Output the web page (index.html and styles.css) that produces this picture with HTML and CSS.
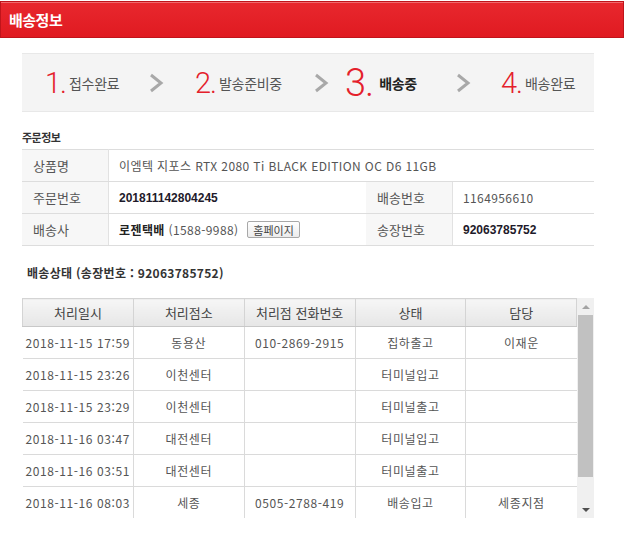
FILE: index.html
```html
<!DOCTYPE html>
<html lang="ko">
<head>
    <meta charset="UTF-8">
    <title>배송정보</title>
    <link rel="stylesheet" href="styles.css">
</head>
<body>

<header class="title-bar">
    <h1>배송정보</h1>
</header>

<div class="steps">
    <div class="step step-1"><span class="num">1.</span>접수완료</div>
    <div class="arrow arrow-1"><svg width="16" height="20" viewBox="0 0 16 20"><polyline points="3,2 13,10 3,18" fill="none" stroke="#a8a8a8" stroke-width="3"/></svg></div>
    <div class="step step-2"><span class="num">2.</span>발송준비중</div>
    <div class="arrow arrow-2"><svg width="16" height="20" viewBox="0 0 16 20"><polyline points="3,2 13,10 3,18" fill="none" stroke="#a8a8a8" stroke-width="3"/></svg></div>
    <div class="step step-3 current"><span class="num">3.</span>배송중</div>
    <div class="arrow arrow-3"><svg width="16" height="20" viewBox="0 0 16 20"><polyline points="3,2 13,10 3,18" fill="none" stroke="#a8a8a8" stroke-width="3"/></svg></div>
    <div class="step step-4"><span class="num">4.</span>배송완료</div>
</div>

<div class="section">
    <h2 class="sub-title">주문정보</h2>
    <table class="info-table">
        <tr>
            <th>상품명</th>
            <td colspan="3">이엠텍 지포스 RTX 2080 Ti BLACK EDITION OC D6 11GB</td>
        </tr>
        <tr>
            <th>주문번호</th>
            <td class="strong">201811142804245</td>
            <th>배송번호</th>
            <td>1164956610</td>
        </tr>
        <tr>
            <th>배송사</th>
            <td><b class="company">로젠택배</b> (1588-9988) <button class="home-btn">홈페이지</button></td>
            <th>송장번호</th>
            <td class="strong">92063785752</td>
        </tr>
    </table>

    <h2 class="sub-title track-title">배송상태 (송장번호 : 92063785752)</h2>

    <div class="track-box">
        <table class="track-table">
            <tr>
                <th>처리일시</th>
                <th>처리점소</th>
                <th>처리점 전화번호</th>
                <th>상태</th>
                <th>담당</th>
            </tr>
            <tr>
                <td>2018-11-15 17:59</td>
                <td>동용산</td>
                <td>010-2869-2915</td>
                <td>집하출고</td>
                <td>이재운</td>
            </tr>
            <tr>
                <td>2018-11-15 23:26</td>
                <td>이천센터</td>
                <td></td>
                <td>터미널입고</td>
                <td></td>
            </tr>
            <tr>
                <td>2018-11-15 23:29</td>
                <td>이천센터</td>
                <td></td>
                <td>터미널출고</td>
                <td></td>
            </tr>
            <tr>
                <td>2018-11-16 03:47</td>
                <td>대전센터</td>
                <td></td>
                <td>터미널입고</td>
                <td></td>
            </tr>
            <tr>
                <td>2018-11-16 03:51</td>
                <td>대전센터</td>
                <td></td>
                <td>터미널출고</td>
                <td></td>
            </tr>
            <tr>
                <td>2018-11-16 08:03</td>
                <td>세종</td>
                <td>0505-2788-419</td>
                <td>배송입고</td>
                <td>세종지점</td>
            </tr>
        </table>
        <div class="scrollbar">
            <div class="scroll-btn up"></div>
            <div class="scroll-thumb"></div>
            <div class="scroll-track"></div>
            <div class="scroll-btn down"></div>
        </div>
    </div>
</div>

</body>
</html>
```

FILE: styles.css
```css
body {
    margin: 0;
    padding: 0;
    background-color: #fff;
    font-family: "Noto Sans CJK KR", "DejaVu Sans", sans-serif;
    color: #555;
}

.title-bar {
    width: 622px;
    height: 35px;
    margin-top: 1px;
    border: 1px solid #c0141b;
    background: linear-gradient(#e8282e, #e01a21);
    box-shadow: inset 0 1px 0 #f06a6e;
    display: flex;
    align-items: center;
}

.title-bar h1 {
    margin: 0 0 0 8px;
    font-size: 15px;
    font-weight: bold;
    color: #fff;
    letter-spacing: -0.5px;
}

.steps {
    margin: 15px 0 0 22px;
    width: 549px;
    height: 57px;
    padding-left: 23px;
    background-color: #f4f4f4;
    border-top: 1px solid #e8e8e8;
    border-bottom: 1px solid #e8e8e8;
    display: flex;
    align-items: center;
}

.step {
    display: flex;
    align-items: center;
    font-size: 14px;
    color: #555;
    letter-spacing: -0.3px;
}

.step .num {
    font-family: Roboto, "Liberation Sans", sans-serif;
    font-weight: 300;
    font-size: 29px;
    color: #e4202b;
    margin-right: 3px;
    letter-spacing: -1px;
}

.step-1 { width: 103px; }
.step-2 { width: 118px; }
.step-3 { width: 110px; }

.step.current {
    color: #222;
    font-weight: bold;
}

.step.current .num {
    font-size: 38px;
    margin-right: 6px;
}

.arrow {
    display: flex;
    align-items: center;
}

.arrow-1 { width: 47px; }
.arrow-2 { width: 32px; }
.arrow-3 { width: 46px; }

.section {
    margin-left: 22px;
    width: 572px;
}

.sub-title {
    margin: 18px 0 5px 0;
    font-size: 11px;
    font-weight: bold;
    color: #333;
    line-height: 14px;
    letter-spacing: -0.5px;
}

.info-table {
    width: 572px;
    border-collapse: collapse;
    font-size: 12px;
}

.info-table th,
.info-table td {
    height: 31px;
    padding: 0;
    border-top: 1px solid #ddd;
    border-bottom: 1px solid #ddd;
    text-align: left;
    font-weight: normal;
}

.info-table th {
    width: 75px;
    padding-left: 11px;
    background-color: #f7f7f7;
    border-right: 1px solid #e2e2e2;
    color: #555;
    font-size: 13px;
}

.info-table td {
    padding-left: 10px;
    color: #555;
    letter-spacing: 0.4px;
}

.info-table td:nth-child(2) {
    width: 247px;
}

.info-table td.strong {
    font-family: "Liberation Sans", sans-serif;
    font-weight: bold;
    color: #1e1a2a;
    letter-spacing: 0;
}

.company {
    color: #222;
}

.home-btn {
    margin-left: 5px;
    padding: 0 5px;
    height: 17px;
    font-family: "Noto Sans CJK KR", sans-serif;
    font-size: 11px;
    line-height: 14px;
    color: #444;
    background: linear-gradient(#fff, #ececec);
    border: 1px solid #a8a8a8;
    border-radius: 2px;
}

.track-title {
    margin: 20px 0 18px 5px;
    font-size: 12px;
    letter-spacing: 0.3px;
}

.track-box {
    display: flex;
    height: 220px;
}

.track-table {
    width: 555px;
    border-collapse: collapse;
    font-size: 12px;
    align-self: flex-start;
}

.track-table th {
    height: 27px;
    padding: 0;
    font-size: 13px;
    font-weight: normal;
    color: #444;
    background: linear-gradient(#f6f6f6, #e6e6e6);
    border: 1px solid #d4d4d4;
    border-bottom: 1px solid #c8c8c8;
    width: 111px;
}

.track-table td {
    height: 31px;
    padding: 0;
    text-align: center;
    color: #555;
    border-bottom: 1px solid #dadada;
    border-left: 1px solid #dadada;
    letter-spacing: 0.6px;
}

.track-table td:first-child {
    border-left: none;
}

.scrollbar {
    width: 17px;
    display: flex;
    flex-direction: column;
    background-color: #f0f0f0;
}

.scroll-btn {
    height: 17px;
    display: flex;
    align-items: center;
    justify-content: center;
}

.scroll-btn.up::before {
    content: "";
    border-left: 4px solid transparent;
    border-right: 4px solid transparent;
    border-bottom: 4px solid #a3a3a3;
}

.scroll-btn.down::before {
    content: "";
    border-left: 4px solid transparent;
    border-right: 4px solid transparent;
    border-top: 4px solid #505050;
}

.scroll-thumb {
    height: 162px;
    margin: 0 1px;
    background-color: #c1c1c1;
}

.scroll-track {
    flex: 1;
}
```
